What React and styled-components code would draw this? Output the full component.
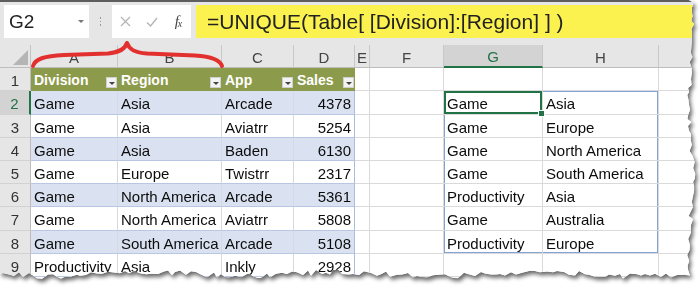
import React from 'react';
import styled, { createGlobalStyle } from 'styled-components';

const GlobalStyle = createGlobalStyle`
  html, body {
    margin: 0;
    padding: 0;
    background: #fff;
  }
  body {
    font-family: "Liberation Sans", Arial, sans-serif;
  }
`;

// deterministic jitter for the torn paper edge
function makeRand(seed) {
  let a = seed;
  return () => {
    a |= 0;
    a = (a + 0x6d2b79f5) | 0;
    let t = Math.imul(a ^ (a >>> 15), 1 | a);
    t = (t + Math.imul(t ^ (t >>> 7), 61 | t)) ^ t;
    return ((t ^ (t >>> 14)) >>> 0) / 4294967296;
  };
}

function tornPolygon() {
  const rand = makeRand(7);
  const pts = ['0px 0px'];
  const bottom = 274;
  let y = 0;
  while (y < bottom) {
    const x = 691 + Math.sin(y / 23) * 2 + (rand() - 0.5) * 5;
    pts.push(`${x.toFixed(1)}px ${y}px`);
    y += 3 + Math.round(rand() * 3);
  }
  let x = 690;
  while (x > 0) {
    const yy = bottom + Math.sin(x / 31) * 2 + (rand() - 0.5) * 6;
    pts.push(`${x}px ${yy.toFixed(1)}px`);
    x -= 3 + Math.round(rand() * 4);
  }
  pts.push(`0px ${bottom}px`);
  return `polygon(${pts.join(', ')})`;
}

const CLIP = tornPolygon();

const Frame = styled.div`
  width: 700px;
  height: 288px;
  filter: drop-shadow(2px 3px 2px rgba(0, 0, 0, 0.6));
`;

const Sheet = styled.div`
  position: relative;
  width: 697px;
  height: 282px;
  background: #fff;
  clip-path: ${(p) => p.$clip};
  overflow: hidden;
`;

const FormulaBar = styled.div`
  display: flex;
  align-items: flex-start;
  height: 45px;
  box-sizing: border-box;
  padding: 3px 0 0 4px;
  background: #e6e6e6;
  border-top: 2px solid #5e5e5e;
`;

const NameBox = styled.div`
  position: relative;
  width: 85px;
  height: 33px;
  box-sizing: border-box;
  padding-left: 5px;
  display: flex;
  align-items: center;
  background: #fff;
  font-size: 19px;
  color: #222;
`;

const Caret = styled.span`
  position: absolute;
  right: 5px;
  top: 15px;
  width: 0;
  height: 0;
  border-left: 3px solid transparent;
  border-right: 3px solid transparent;
  border-top: 3px solid #777;
`;

const Grip = styled.div`
  width: 23px;
  height: 33px;
  display: flex;
  flex-direction: column;
  align-items: center;
  justify-content: center;
  gap: 2px;
`;

const GripDot = styled.span`
  width: 1.5px;
  height: 1.5px;
  background: #9a9a9a;
`;

const ButtonsBox = styled.div`
  width: 79px;
  height: 33px;
  display: flex;
  align-items: center;
  background: #fff;
`;

const IconSlot = styled.span`
  width: ${(p) => p.$w}px;
  display: flex;
  justify-content: center;
  align-items: center;
`;

const Fx = styled.span`
  font-family: "Liberation Serif", "Times New Roman", serif;
  font-style: italic;
  font-size: 15px;
  color: #444;
  letter-spacing: -1px;

  sub {
    font-size: 10px;
    vertical-align: -1px;
  }
`;

const FormulaBox = styled.div`
  flex: 1;
  height: 33px;
  margin-left: 5px;
  box-sizing: border-box;
  padding-left: 11px;
  display: flex;
  align-items: center;
  background: #fbf14f;
  font-size: 21px;
  color: #222;
  white-space: pre;
`;

const Grid = styled.div`
  display: grid;
  grid-template-columns: 31px 87px 104px 72px 61px 15px 74px 99px 116px 1fr;
  grid-template-rows: 23px 23px 24px 23px 23px 23px 23px 24px 23px 23px;
  font-size: 15px;
  color: #0c0c0c;
`;

const CornerCell = styled.div`
  position: relative;
  background: #e6e6e6;
  border-right: 1px solid #c4c4c4;
  border-bottom: 1px solid #bdbdbd;

  &::after {
    content: '';
    position: absolute;
    right: 2px;
    bottom: 2px;
    width: 0;
    height: 0;
    border-left: 15px solid transparent;
    border-bottom: 15px solid #b5b5b5;
  }
`;

const ColHead = styled.div`
  display: flex;
  align-items: center;
  justify-content: center;
  padding-top: 2px;
  box-sizing: border-box;
  background: ${(p) => (p.$active ? '#d3d3d3' : '#e6e6e6')};
  color: ${(p) => (p.$active ? '#217346' : '#444')};
  border-right: 1px solid #c8c8c8;
  border-bottom: ${(p) => (p.$active ? '2px solid #217346' : '1px solid #bdbdbd')};
`;

const RowHead = styled.div`
  display: flex;
  align-items: center;
  justify-content: center;
  padding-top: 2px;
  box-sizing: border-box;
  background: ${(p) => (p.$active ? '#d3d3d3' : '#e6e6e6')};
  color: ${(p) => (p.$active ? '#217346' : '#333')};
  border-right: ${(p) => (p.$active ? '2px solid #217346' : '1px solid #bdbdbd')};
  border-bottom: 1px solid #d2d2d2;
`;

const HeadCell = styled.div`
  position: relative;
  display: flex;
  align-items: center;
  padding-left: 3px;
  background: #8c9a4b;
  color: #fff;
  font-weight: bold;
  font-size: 14px;
`;

const FilterButton = styled.span`
  position: absolute;
  right: 1px;
  bottom: 3px;
  width: 11px;
  height: 11px;
  box-sizing: border-box;
  background: #f3f3f3;
  border: 1px solid #cfcfcf;

  &::after {
    content: '';
    position: absolute;
    left: 2px;
    bottom: 2px;
    border-left: 3px solid transparent;
    border-right: 3px solid transparent;
    border-top: 3px solid #444;
  }
`;

const DataCell = styled.div`
  display: flex;
  align-items: center;
  justify-content: ${(p) => (p.$num ? 'flex-end' : 'flex-start')};
  padding: 2px ${(p) => (p.$num ? '3px' : '0')} 0 ${(p) => (p.$num ? '0' : '3px')};
  box-sizing: border-box;
  white-space: nowrap;
  background: ${(p) => (p.$band ? '#dae2f1' : '#fff')};
  border-bottom: 1px solid #b9c7e3;
  border-right: 1px solid ${(p) => (p.$last ? '#a9bde0' : '#d5d9e2')};
`;

const SheetCell = styled.div`
  position: relative;
  display: flex;
  align-items: center;
  padding: 2px 0 0 3px;
  box-sizing: border-box;
  white-space: nowrap;
  background: #fff;
  border-right: 1px solid #dadada;
  border-bottom: 1px solid #dadada;
  box-shadow: ${(p) => p.$edges};
`;

const FillHandle = styled.span`
  position: absolute;
  right: -3px;
  bottom: -3px;
  width: 5px;
  height: 5px;
  background: #217346;
  border: 1px solid #fff;
  z-index: 2;
`;

const BraceLayer = styled.svg`
  position: absolute;
  left: 0;
  top: 0;
  pointer-events: none;
`;

const COLS = ['A', 'B', 'C', 'D', 'E', 'F', 'G', 'H', ''];
const HEADERS = ['Division', 'Region', 'App', 'Sales'];

const TABLE = [
  ['Game', 'Asia', 'Arcade', 4378],
  ['Game', 'Asia', 'Aviatrr', 5254],
  ['Game', 'Asia', 'Baden', 6130],
  ['Game', 'Europe', 'Twistrr', 2317],
  ['Game', 'North America', 'Arcade', 5361],
  ['Game', 'North America', 'Aviatrr', 5808],
  ['Game', 'South America', 'Arcade', 5108],
  ['Productivity', 'Asia', 'Inkly', 2928],
];

const SPILL = [
  ['Game', 'Asia'],
  ['Game', 'Europe'],
  ['Game', 'North America'],
  ['Game', 'South America'],
  ['Productivity', 'Asia'],
  ['Game', 'Australia'],
  ['Productivity', 'Europe'],
];

const SPILL_BLUE = '#86a2d2';

function spillEdges(r, c) {
  // r: index into SPILL, c: 0 for G, 1 for H
  if (r < 0 || r >= SPILL.length) return 'none';
  if (r === 0 && c === 0) return 'inset 0 0 0 2px #217346';
  const s = [];
  if (r === 0) s.push(`inset 0 1px 0 ${SPILL_BLUE}`);
  if (r === SPILL.length - 1) s.push(`inset 0 -1px 0 ${SPILL_BLUE}`);
  if (c === 0) s.push(`inset 1px 0 0 ${SPILL_BLUE}`);
  if (c === 1) s.push(`inset -1px 0 0 ${SPILL_BLUE}`);
  return s.length ? s.join(', ') : 'none';
}

const XIcon = () => (
  <svg width="11" height="11" viewBox="0 0 11 11">
    <path d="M1 1 L10 10 M10 1 L1 10" stroke="#b3b3b3" strokeWidth="1.2" fill="none" />
  </svg>
);

const CheckIcon = () => (
  <svg width="12" height="10" viewBox="0 0 12 10">
    <path d="M1 5.5 L4.5 9 L11 1" stroke="#b3b3b3" strokeWidth="1.3" fill="none" />
  </svg>
);

const Brace = () => (
  <BraceLayer width="240" height="80" viewBox="0 0 240 80">
    <path
      d="M33 66 C35 59 44 56 64 55 L108 53.5 C120 52.5 125 49 127 43 C129 49 134 52.5 147 53.5 L195 55.5 C212 56.5 220 60 222 66"
      stroke="#e2302e"
      strokeWidth="4"
      strokeLinecap="round"
      strokeLinejoin="round"
      fill="none"
    />
  </BraceLayer>
);

export default function App() {
  const rows = [];
  for (let r = 1; r <= 9; r += 1) {
    rows.push(
      <RowHead key={`rh${r}`} $active={r === 2}>
        {r}
      </RowHead>
    );
    if (r === 1) {
      HEADERS.forEach((h) => (
        rows.push(
          <HeadCell key={`h${h}`}>
            {h}
            <FilterButton />
          </HeadCell>
        )
      ));
    } else {
      const d = TABLE[r - 2];
      d.forEach((v, i) => {
        rows.push(
          <DataCell key={`d${r}-${i}`} $band={r % 2 === 0} $num={i === 3} $last={i === 3}>
            {v}
          </DataCell>
        );
      });
    }
    // E, F
    rows.push(<SheetCell key={`e${r}`} $edges="none" />);
    rows.push(<SheetCell key={`f${r}`} $edges="none" />);
    const si = r - 2;
    const s = SPILL[si];
    rows.push(
      <SheetCell key={`g${r}`} $edges={spillEdges(si, 0)}>
        {s ? s[0] : ''}
        {si === 0 && <FillHandle />}
      </SheetCell>
    );
    rows.push(
      <SheetCell key={`hh${r}`} $edges={spillEdges(si, 1)}>
        {s ? s[1] : ''}
      </SheetCell>
    );
    rows.push(<SheetCell key={`i${r}`} $edges="none" />);
  }

  return (
    <>
      <GlobalStyle />
      <Frame>
        <Sheet $clip={CLIP}>
          <FormulaBar>
            <NameBox>
              G2
              <Caret />
            </NameBox>
            <Grip>
              <GripDot />
              <GripDot />
              <GripDot />
            </Grip>
            <ButtonsBox>
              <IconSlot $w={26}>
                <XIcon />
              </IconSlot>
              <IconSlot $w={27}>
                <CheckIcon />
              </IconSlot>
              <IconSlot $w={26}>
                <Fx>
                  f<sub>x</sub>
                </Fx>
              </IconSlot>
            </ButtonsBox>
            <FormulaBox>=UNIQUE(Table[ [Division]:[Region] ] )</FormulaBox>
          </FormulaBar>
          <Grid>
            <CornerCell />
            {COLS.map((c, i) => (
              <ColHead key={`c${i}`} $active={c === 'G'}>
                {c}
              </ColHead>
            ))}
            {rows}
          </Grid>
          <Brace />
        </Sheet>
      </Frame>
    </>
  );
}
